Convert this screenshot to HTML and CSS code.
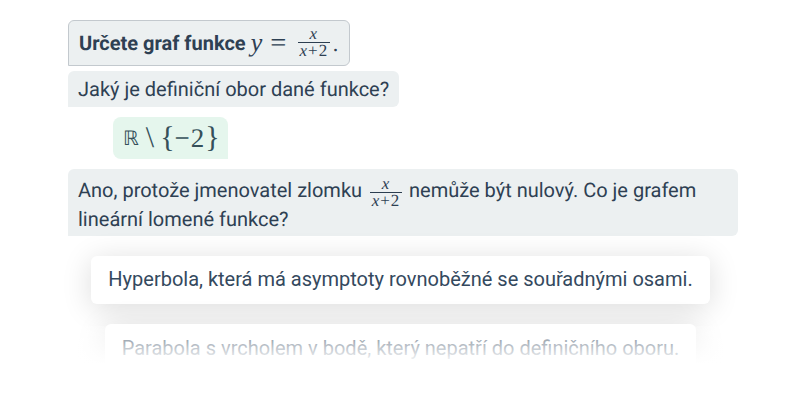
FILE: index.html
```html
<!DOCTYPE html>
<html lang="cs">
<head>
  <meta charset="UTF-8">
  <title>Graf funkce</title>
  <link rel="stylesheet" href="styles.css">
</head>
<body>

<main class="chat">
  <div class="bubble heading">
    <b>Určete graf funkce</b>
    <span class="math big"><i class="var">y</i><span class="eq">=</span><span class="frac"><i class="num">x</i><span class="den"><i>x</i>+2</span></span><span class="dot">.</span></span>
  </div>

  <div class="bubble question">Jaký je definiční obor dané funkce?</div>

  <div class="bubble answer"><span class="math result"><span class="bb">ℝ</span><span class="set">\</span><span class="brace">{</span><span class="minus">−2</span><span class="brace">}</span></span></div>

  <div class="bubble question wide">
    Ano, protože jmenovatel zlomku
    <span class="math"><span class="frac"><i class="num">x</i><span class="den"><i>x</i>+2</span></span></span>
    nemůže být nulový. Co je grafem lineární lomené funkce?
  </div>

  <div class="options">
    <button class="option first">Hyperbola, která má asymptoty rovnoběžné se souřadnými osami.</button>
    <button class="option second">Parabola s vrcholem v bodě, který nepatří do definičního oboru.</button>
  </div>
</main>

<div class="fade"></div>

</body>
</html>
```

FILE: styles.css
```css
html, body {
  height: 400px;
  overflow: hidden;
}
body {
  font-family: 'Roboto', sans-serif;
  background: #fff;
  color: #2e4053;
  margin: 0;
  padding: 0;
  font-size: 20px;
  line-height: 28px;
  text-rendering: geometricPrecision;
}
.chat {
  width: 670px;
  margin: 0 0 0 68px;
  padding-top: 20px;
  display: flex;
  flex-direction: column;
  align-items: flex-start;
}
.bubble {
  background: #ecf0f1;
  padding: 4px 10px;
  border-radius: 6px 6px 6px 0;
  box-sizing: border-box;
}
.heading {
  width: 282px;
  height: 46px;
  border: 1px solid #c3c9ce;
  display: flex;
  align-items: center;
  gap: 5px;
  margin-bottom: 5px;
  padding-bottom: 5px;
  white-space: nowrap;
}
.heading b {
  font-weight: 700;
}
.question {
  margin-bottom: 10px;
}
.question.wide {
  width: 670px;
  height: 67px;
  padding-top: 7px;
  margin-bottom: 20px;
}
.answer {
  background: #e5f6ed;
  margin: 0 0 10px 45px;
  width: 115px;
  height: 42px;
  padding: 0 10px;
  border-radius: 8px 8px 0 8px;
  display: flex;
  align-items: center;
  white-space: nowrap;
}
.math {
  font-family: 'Liberation Serif', serif;
  white-space: nowrap;
}
.big {
  font-size: 26px;
  display: inline-flex;
  align-items: center;
}
.var {
  margin-right: 9px;
}
.eq {
  margin-right: 9px;
  transform: scaleX(1.1);
}
.dot {
  margin-left: 1px;
  align-self: flex-end;
  line-height: 26px;
  font-size: 22px;
}
.frac {
  display: inline-flex;
  flex-direction: column;
  align-items: center;
  vertical-align: middle;
  font-size: 17px;
  line-height: 16px;
  margin: -8px 2px -8px 3px;
  letter-spacing: 1px;
}
.den {
  border-top: 1px solid #2c3e50;
  min-width: 32px;
  text-align: center;
}
.result {
  font-size: 27px;
  color: #35505a;
  display: flex;
  align-items: center;
}
.bb {
  font-family: 'DejaVu Sans', sans-serif;
  font-size: 20px;
  margin-right: 7px;
}
.set {
  margin-right: 6px;
  font-size: 30px;
}
.brace {
  font-size: 30px;
}
.minus {
  letter-spacing: 1px;
}
.options {
  align-self: stretch;
  padding-right: 5px;
  display: flex;
  flex-direction: column;
  align-items: center;
  gap: 20px;
}
.option {
  font: inherit;
  color: #34495e;
  background: #fff;
  border: none;
  border-radius: 6px;
  height: 48px;
  white-space: nowrap;
  box-shadow: 0 4px 30px rgba(0, 0, 0, 0.14);
  padding: 0;
}
.first {
  width: 619px;
  padding-bottom: 2px;
}
.second {
  width: 591px;
}
.fade {
  position: absolute;
  left: 0;
  top: 326px;
  width: 800px;
  height: 74px;
  background: linear-gradient(to bottom, rgba(255, 255, 255, 0.25) 0, rgba(255, 255, 255, 0.7) 22px, #fff 38px);
}
```
